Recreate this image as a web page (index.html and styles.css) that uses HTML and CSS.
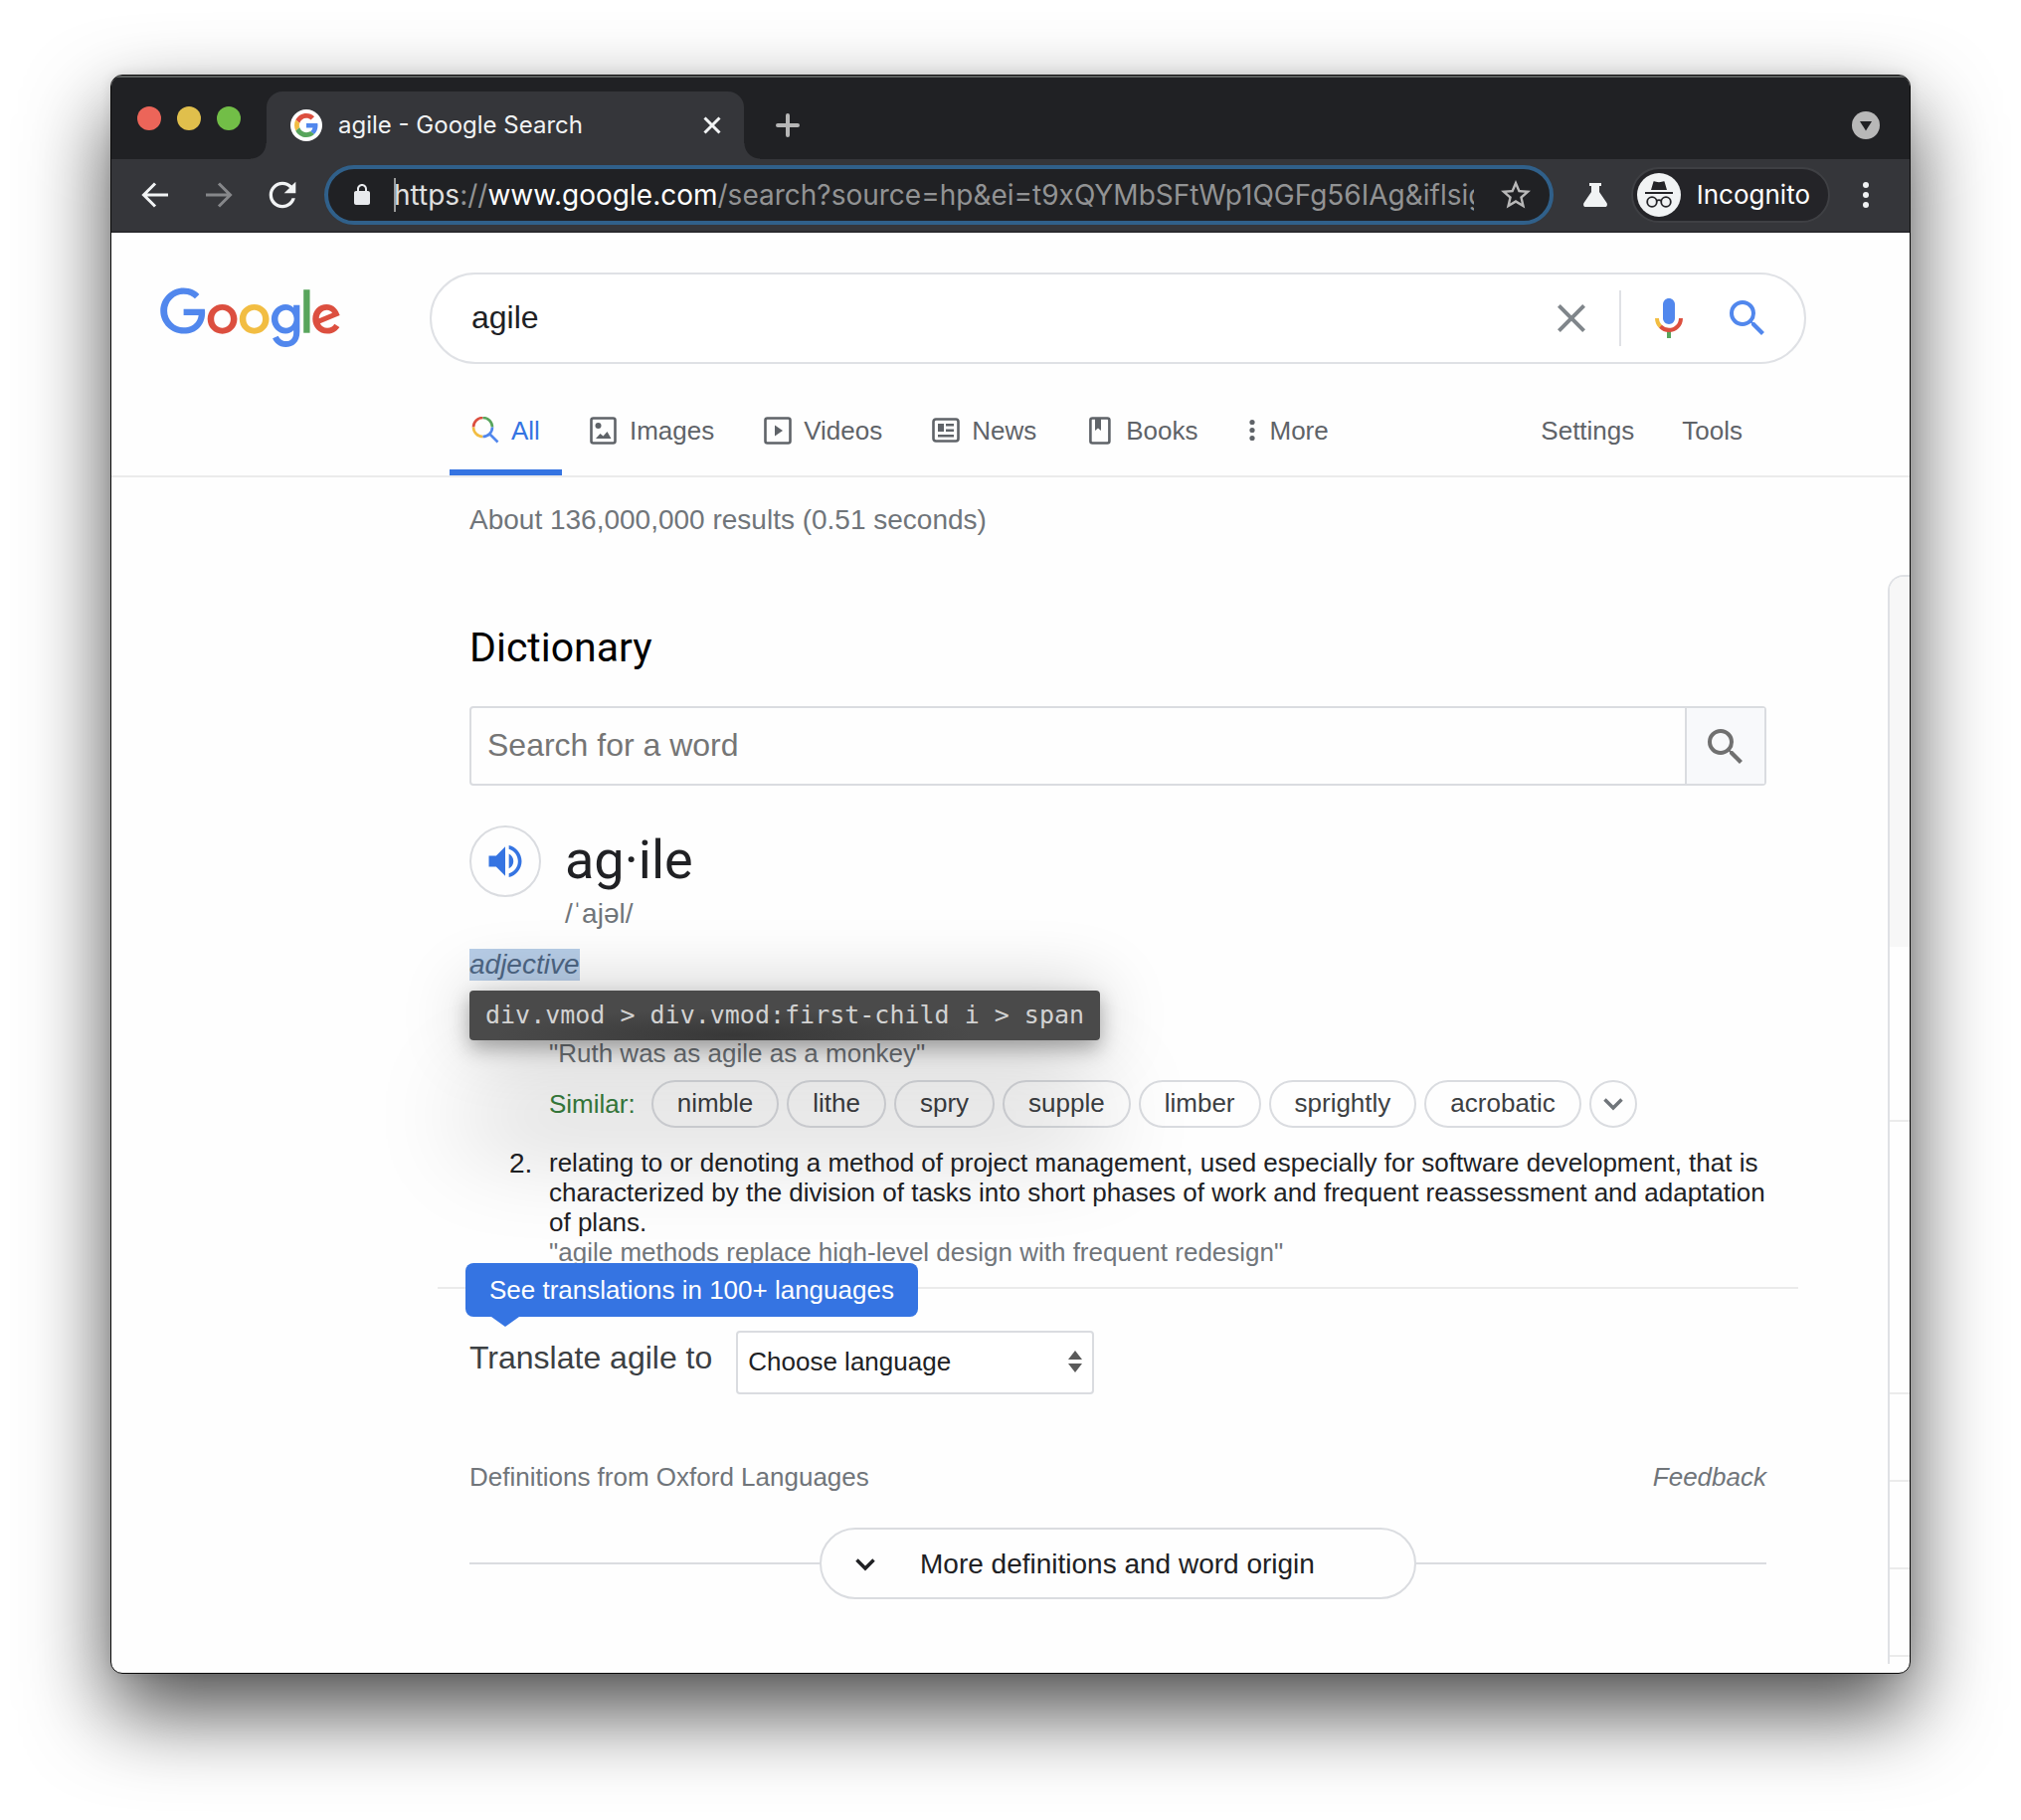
FILE: index.html
```html
<!DOCTYPE html>
<html lang="en">
<head>
<meta charset="utf-8">
<title>agile - Google Search</title>
<link rel="stylesheet" href="styles.css">
</head>
<body>
<div class="window">
  <div class="tabstrip">
    <div class="lights"><span class="light red"></span><span class="light yellow"></span><span class="light green"></span></div>
    <div class="tab">
      <span class="favicon"><svg width="24" height="24" viewBox="0 0 48 48"><path fill="#dc4f3f" d="M24 9.5c3.54 0 6.71 1.22 9.21 3.6l6.85-6.85C35.9 2.38 30.47 0 24 0 14.62 0 6.51 5.38 2.56 13.22l7.98 6.19C12.43 13.72 17.74 9.5 24 9.5z"/><path fill="#5187ed" d="M46.98 24.55c0-1.57-.15-3.09-.38-4.55H24v9.02h12.94c-.58 2.96-2.26 5.48-4.78 7.18l7.73 6c4.51-4.18 7.09-10.36 7.09-17.65z"/><path fill="#f2bd42" d="M10.53 28.59c-.48-1.45-.76-2.99-.76-4.59s.27-3.14.76-4.59l-7.98-6.19C.92 16.46 0 20.12 0 24c0 3.88.92 7.54 2.56 10.78l7.97-6.19z"/><path fill="#58a55c" d="M24 48c6.48 0 11.93-2.13 15.89-5.81l-7.73-6c-2.15 1.45-4.92 2.3-8.16 2.3-6.26 0-11.57-4.22-13.47-9.91l-7.98 6.19C6.51 42.62 14.62 48 24 48z"/></svg></span>
      <span class="tab-title">agile - Google Search</span>
      <button class="icon-btn tab-close" aria-label="Close tab"><svg width="20" height="20" viewBox="0 0 20 20" fill="none" stroke="#f1f3f4" stroke-width="3"><path d="M2.500 2.500l15 15M17.500 2.500l-15 15"/></svg></button>
    </div>
    <button class="icon-btn new-tab" aria-label="New tab"><svg width="26" height="26" viewBox="0 0 26 26" fill="none" stroke="#b6b6b6" stroke-width="4" stroke-linecap="round"><path d="M13 3v20M3 13h20"/></svg></button>
    <button class="icon-btn tab-search" aria-label="Search tabs"><svg width="28" height="28" viewBox="0 0 28 28"><circle cx="14" cy="14" r="14" fill="#b8b8b8"/><path d="M8 10h12l-6 9.500z" fill="#202124"/></svg></button>
  </div>

  <div class="toolbar">
    <button class="icon-btn tool" aria-label="Back"><svg width="40" height="40" viewBox="0 0 40 40" fill="none" stroke="#f1f3f4" stroke-width="3"><path d="M33 20H9M20 8.500L8.500 20 20 31.500"/></svg></button>
    <button class="icon-btn tool" aria-label="Forward"><svg width="40" height="40" viewBox="0 0 40 40" fill="none" stroke="#86878a" stroke-width="3"><path d="M7 20h24M20 8.500L31.500 20 20 31.500"/></svg></button>
    <button class="icon-btn tool" aria-label="Reload"><svg width="40" height="40" viewBox="0 0 24 24" fill="#f1f3f4"><path d="M17.650 6.350C16.200 4.900 14.210 4 12 4c-4.420 0-7.990 3.580-7.990 8s3.570 8 7.990 8c3.730 0 6.840-2.550 7.730-6h-2.080c-.82 2.330-3.040 4-5.650 4-3.310 0-6-2.690-6-6s2.690-6 6-6c1.660 0 3.140.69 4.220 1.780L13 11h7V4l-2.350 2.350z"/></svg></button>
    <div class="omnibox">
      <svg class="lock" width="24" height="24" viewBox="0 0 24 24" fill="#e8eaed"><path d="M18 8h-1V6c0-2.760-2.240-5-5-5S7 3.240 7 6v2H6c-1.100 0-2 .9-2 2v10c0 1.100.9 2 2 2h12c1.100 0 2-.9 2-2V10c0-1.100-.9-2-2-2zM9 6c0-1.660 1.340-3 3-3s3 1.340 3 3v2H9V6z"/></svg>
      <div class="url" role="textbox" aria-label="Address" tabindex="0"><span class="scheme">https</span>://<span class="host">www.google.com</span>/search?source=hp&amp;ei=t9xQYMbSFtWp1QGFg56IAg&amp;iflsig</div>
      <button class="icon-btn star" aria-label="Bookmark this page"><svg width="36" height="36" viewBox="0 0 24 24" fill="#b8b8b8"><path d="M22 9.240l-7.190-.62L12 2 9.190 8.630 2 9.240l5.460 4.730L5.820 21 12 17.270 18.180 21l-1.630-7.030L22 9.240zM12 15.400l-3.760 2.270 1-4.280-3.320-2.880 4.380-.38L12 6.100l1.710 4.040 4.380.38-3.320 2.880 1 4.280L12 15.400z"/></svg></button>
    </div>
    <button class="icon-btn flask" aria-label="Experiments"><svg width="24" height="24" viewBox="0 0 24 24" fill="#f1f3f4"><path d="M6 0h12v3h-2v6l7.500 11c1 2 .2 4-2 4h-19c-2.200 0-3-2-2-4L8 9V3H6z"/></svg></button>
    <button class="profile">
      <svg width="44" height="44" viewBox="0 0 44 44"><circle cx="22" cy="22" r="22" fill="#f1f3f4"/><path d="M16.500 8.500c1-.6 3 .8 5.500.8s4.500-1.400 5.500-.8L30 17H14z" fill="#242428"/><path d="M8 20h28" stroke="#242428" stroke-width="2"/><g fill="none" stroke="#242428" stroke-width="1.800"><circle cx="15" cy="29" r="4.800"/><circle cx="29" cy="29" r="4.800"/><path d="M19.500 28q2.500-1.600 5 0"/></g></svg>
      <span>Incognito</span>
    </button>
    <button class="icon-btn menu" aria-label="Menu"><svg width="8" height="28" viewBox="0 0 8 28" fill="#f1f3f4"><circle cx="4" cy="4" r="3"/><circle cx="4" cy="14" r="3"/><circle cx="4" cy="24" r="3"/></svg></button>
  </div>

  <div class="page">
    <header class="masthead">
      <a class="logo" href="#" aria-label="Google"><svg width="182" height="62" viewBox="0 0 272 92"><path fill="#dc4f3f" d="M115.750 47.180c0 12.770-9.990 22.180-22.250 22.180s-22.250-9.410-22.250-22.180C71.250 34.320 81.240 25 93.500 25s22.250 9.320 22.250 22.180zm-9.740 0c0-7.980-5.790-13.440-12.510-13.440S80.990 39.200 80.990 47.180c0 7.900 5.790 13.440 12.510 13.440s12.510-5.550 12.510-13.440z"/><path fill="#f2bd42" d="M163.750 47.180c0 12.770-9.990 22.180-22.250 22.180s-22.250-9.410-22.250-22.180c0-12.850 9.990-22.180 22.250-22.180s22.250 9.320 22.250 22.180zm-9.740 0c0-7.980-5.790-13.440-12.510-13.440s-12.510 5.460-12.510 13.440c0 7.900 5.790 13.440 12.510 13.440s12.510-5.550 12.510-13.440z"/><path fill="#5187ed" d="M209.750 26.340v39.820c0 16.380-9.660 23.070-21.080 23.070-10.750 0-17.220-7.190-19.660-13.070l8.480-3.530c1.510 3.610 5.210 7.870 11.170 7.870 7.310 0 11.840-4.510 11.840-13v-3.190h-.34c-2.180 2.690-6.380 5.040-11.680 5.040-11.090 0-21.250-9.660-21.250-22.090 0-12.520 10.160-22.260 21.250-22.260 5.290 0 9.490 2.350 11.680 4.960h.34v-3.610h9.250zm-8.560 20.920c0-7.810-5.210-13.520-11.840-13.520-6.720 0-12.350 5.710-12.350 13.520 0 7.730 5.630 13.360 12.350 13.360 6.630 0 11.840-5.630 11.840-13.360z"/><path fill="#58a55c" d="M225 3v65h-9.500V3h9.500z"/><path fill="#dc4f3f" d="M262.020 54.480l7.560 5.040c-2.440 3.610-8.320 9.830-18.480 9.830-12.600 0-22.010-9.740-22.010-22.180 0-13.190 9.490-22.180 20.920-22.180 11.510 0 17.140 9.160 18.980 14.110l1.010 2.520-29.650 12.280c2.270 4.450 5.800 6.720 10.750 6.720 4.960 0 8.400-2.440 10.920-6.140zm-23.270-7.980l19.820-8.230c-1.090-2.770-4.370-4.700-8.230-4.700-4.950 0-11.840 4.370-11.590 12.930z"/><path fill="#5187ed" d="M35.290 41.410V32H67c.31 1.640.47 3.580.47 5.680 0 7.060-1.930 15.790-8.150 22.010-6.050 6.300-13.780 9.660-24.020 9.660C16.320 69.350.36 53.890.36 34.910.36 15.930 16.320.47 35.300.47c10.500 0 17.980 4.120 23.600 9.490l-6.640 6.640c-4.030-3.780-9.490-6.720-16.970-6.720-13.860 0-24.700 11.170-24.700 25.030 0 13.860 10.840 25.030 24.700 25.030 8.990 0 14.110-3.610 17.390-6.890 2.660-2.660 4.410-6.460 5.100-11.650l-22.490.01z"/></svg></a>
      <form class="searchbox">
        <input class="query" type="text" value="agile" aria-label="Search">
        <button class="icon-btn" type="button" aria-label="Clear"><svg width="48" height="48" viewBox="0 0 24 24" fill="#80868b"><path d="M19 6.410L17.590 5 12 10.590 6.410 5 5 6.410 10.590 12 5 17.590 6.410 19 12 13.410 17.590 19 19 17.590 13.410 12z"/></svg></button>
        <span class="rule"></span>
        <button class="icon-btn" type="button" aria-label="Search by voice"><svg width="48" height="48" viewBox="0 0 24 24"><path fill="#5187ed" d="m12 15c1.660 0 3-1.310 3-2.970v-7.020c0-1.660-1.340-3.010-3-3.010s-3 1.340-3 3.010v7.020c0 1.660 1.340 2.970 3 2.970z"/><path fill="#58a55c" d="m11 18.080h2v3.920h-2z"/><path fill="#f2bd42" d="m7.050 16.870c-1.270-1.330-2.050-2.830-2.050-4.870h2c0 1.450 0.560 2.420 1.470 3.380v0.320l-1.150 1.180z"/><path fill="#dc4f3f" d="m12 16.930a4.970 5.250 0 0 1 -3.540 -1.550l-1.410 1.490c1.260 1.340 3.020 2.130 4.950 2.130 3.870 0 6.990-2.920 6.990-7h-1.990c0 2.920-2.240 4.930-5 4.930z"/></svg></button>
        <button class="icon-btn submit" type="submit" aria-label="Google Search"><svg width="48" height="48" viewBox="0 0 24 24" fill="#5187ed"><path d="M15.500 14h-.79l-.28-.27A6.471 6.471 0 0 0 16 9.500 6.500 6.500 0 1 0 9.500 16c1.610 0 3.090-.59 4.230-1.570l.27.28v.79l5 4.990L20.490 19l-4.990-5zm-6 0C7.010 14 5 11.990 5 9.500S7.010 5 9.500 5 14 7.010 14 9.500 11.990 14 9.500 14z"/></svg></button>
      </form>
    </header>

    <nav class="modes">
      <a class="mode current" href="#"><svg width="28" height="28" viewBox="0 0 28 28" fill="none" stroke-width="2.600"><path stroke="#dc4f3f" d="M2 10.500a9.500 9.500 0 0 1 9.500-9.500"/><path stroke="#58a55c" d="M11.500 1a9.500 9.500 0 0 1 9.500 9.500"/><path stroke="#f2bd42" d="M2 10.500a9.500 9.500 0 0 0 9.500 9.500"/><path stroke="#5187ed" d="M11.500 20a9.500 9.500 0 0 0 9.500-9.500M17.500 16.500l9 9"/></svg>All</a>
      <a class="mode" href="#"><svg width="28" height="28" viewBox="0 0 28 28"><rect x="1.500" y="1.500" width="24" height="25" rx="2" fill="none" stroke="#5f6368" stroke-width="2.600"/><circle cx="8.500" cy="9" r="3" fill="#5f6368"/><path d="M6 22l4.500-5 3 2.500 4-4.500 4 7z" fill="#5f6368"/></svg>Images</a>
      <a class="mode" href="#"><svg width="28" height="28" viewBox="0 0 28 28"><rect x="1.500" y="1.500" width="25" height="25" rx="2" fill="none" stroke="#5f6368" stroke-width="2.600"/><path d="M11 8.500v11l8-5.500z" fill="#5f6368"/></svg>Videos</a>
      <a class="mode" href="#"><svg width="28" height="28" viewBox="0 0 28 28"><rect x="1.500" y="2.500" width="25" height="22" rx="2.500" fill="none" stroke="#5f6368" stroke-width="2.600"/><path d="M6 7h6v8H6zM14 7h8v2.500h-8zM14 12.500h8V15h-8zM6 18h16v2.500H6z" fill="#5f6368"/></svg>News</a>
      <a class="mode" href="#"><svg width="28" height="28" viewBox="0 0 28 28"><rect x="4.400" y="1.500" width="19" height="25" rx="2" fill="none" stroke="#5f6368" stroke-width="2.600"/><path d="M9 2h6v12l-3-2.500L9 14z" fill="#5f6368"/></svg>Books</a>
      <button class="mode"><svg width="10" height="24" viewBox="0 0 10 24" fill="#5f6368"><circle cx="5" cy="3.500" r="2.600"/><circle cx="5" cy="11.500" r="2.600"/><circle cx="5" cy="19.500" r="2.600"/></svg>More</button>
      <div class="mode-tools"><a href="#">Settings</a><a href="#">Tools</a></div>
    </nav>

    <div class="results">
      <main class="column">
        <p class="stats">About 136,000,000 results (0.51 seconds)</p>
        <h2 class="heading">Dictionary</h2>
        <form class="word-search">
          <input type="text" placeholder="Search for a word" aria-label="Search for a word">
          <button class="icon-btn" type="submit" aria-label="Look up"><svg width="48" height="48" viewBox="0 0 24 24" fill="#707070"><path d="M15.500 14h-.79l-.28-.27A6.471 6.471 0 0 0 16 9.500 6.500 6.500 0 1 0 9.500 16c1.610 0 3.090-.59 4.230-1.570l.27.28v.79l5 4.990L20.490 19l-4.990-5zm-6 0C7.010 14 5 11.990 5 9.500S7.010 5 9.500 5 14 7.010 14 9.500 11.990 14 9.500 14z"/></svg></button>
        </form>
        <div class="headword">
          <button class="speak" aria-label="Listen"><svg width="44" height="44" viewBox="0 0 24 24" fill="#3574e2"><path d="M3 9v6h4l5 5V4L7 9H3zm13.500 3c0-1.770-1.020-3.290-2.500-4.030v8.050c1.480-.73 2.500-2.250 2.500-4.020zM14 3.230v2.060c2.890.86 5 3.540 5 6.710s-2.110 5.850-5 6.710v2.060c4.010-.91 7-4.490 7-8.770s-2.990-7.860-7-8.770z"/></svg></button>
          <div>
            <div class="word">ag·ile</div>
            <div class="phonetic">/ˈajəl/</div>
          </div>
        </div>
        <div class="pos"><i class="inspected">adjective</i><div class="selector-tip">div.vmod &gt; div.vmod:first-child i &gt; span</div></div>
        <p class="example first">"Ruth was as agile as a monkey"</p>
        <div class="similar">
          <span class="similar-label">Similar:</span>
          <button class="chip">nimble</button><button class="chip">lithe</button><button class="chip">spry</button><button class="chip">supple</button><button class="chip">limber</button><button class="chip">sprightly</button><button class="chip">acrobatic</button>
          <button class="chip more" aria-label="More similar words"><svg width="20" height="14" viewBox="0 0 20 14" fill="none" stroke="#70757a" stroke-width="3.500"><path d="M1.500 2.500l8.500 8.500 8.500-8.500"/></svg></button>
        </div>
        <div class="sense">
          <span class="num">2.</span>
          <div>
            <p class="definition">relating to or denoting a method of project management, used especially for software development, that is characterized by the division of tasks into short phases of work and frequent reassessment and adaptation of plans.</p>
            <p class="example">"agile methods replace high-level design with frequent redesign"</p>
          </div>
        </div>
        <div class="translate">
          <div class="callout">See translations in 100+ languages</div>
          <label for="lang">Translate agile to</label>
          <div class="select-wrap">
            <select id="lang"><option>Choose language</option></select>
            <svg class="select-arrows" width="14" height="22" viewBox="0 0 14 22" fill="#5a5a5a"><path d="M0 9l7-9 7 9zM0 13l7 9 7-9z"/></svg>
          </div>
        </div>
        <div class="source"><span>Definitions from Oxford Languages</span><a href="#">Feedback</a></div>
        <div class="expand"><button class="expand-btn"><svg width="20" height="14" viewBox="0 0 20 14" fill="none" stroke="#202124" stroke-width="3.500"><path d="M1.500 2.500l8.500 8.500 8.500-8.500"/></svg><span>More definitions and word origin</span></button></div>
      </main>
      <aside class="side-card"><div class="side-image"></div><div class="side-row title"></div><div class="side-row about"></div><div class="side-row"></div><div class="side-row"></div><div class="side-row"></div></aside>
    </div>
  </div>
</div>
</body>
</html>
```
FILE: styles.css
```css
* { box-sizing: border-box; }
body { margin: 0; padding: 75px 111px 147px; background: #fff; color: #202124; font-family: "Liberation Sans", Arial, sans-serif; font-size: 26px; line-height: 30px; }
p, h2 { margin: 0; font-weight: 400; }
svg { display: block; flex: none; }
a { color: inherit; text-decoration: none; }
button, input, select { font: inherit; color: inherit; }
button { margin: 0; padding: 0; border: 0; background: none; }
input { min-width: 0; border: 0; outline: 0; background: none; }
.icon-btn { display: flex; align-items: center; justify-content: center; flex: none; }

.window { border: 1px solid #0a0a0a; border-radius: 12px; overflow: hidden; background: #fefefe; box-shadow: 0 38px 84px rgba(0, 0, 0, .7), 0 0 12px rgba(0, 0, 0, .1); }

/* tab strip */
.tabstrip { display: flex; align-items: flex-end; height: 84px; padding: 0 30px 0 26px; background: #202124; box-shadow: inset 0 2px 0 #5c5f5e; color: #f1f3f4; font-family: Inter, sans-serif; }
.lights { display: flex; gap: 16px; padding-bottom: 29px; }
.light { width: 24px; height: 24px; border-radius: 50%; }
.red { background: #ec6559; }
.yellow { background: #e0bf4c; }
.green { background: #72be47; }
.tab { position: relative; display: flex; align-items: center; width: 480px; height: 68px; margin-left: 26px; padding: 0 22px 0 24px; border-radius: 16px 16px 0 0; background: #35363a; }
.tab::before, .tab::after { content: ""; position: absolute; bottom: 0; width: 16px; height: 16px; }
.tab::before { left: -16px; background: radial-gradient(circle at 0 0, transparent 15px, #35363a 16px); }
.tab::after { right: -16px; background: radial-gradient(circle at 100% 0, transparent 15px, #35363a 16px); }
.favicon { display: flex; align-items: center; justify-content: center; width: 32px; height: 32px; border-radius: 50%; background: #fff; }
.tab-title { flex: 1; margin-left: 16px; font-size: 24px; white-space: nowrap; }
.new-tab { height: 68px; margin-left: 31px; }
.tab-search { height: 68px; margin-left: auto; }

/* toolbar */
.toolbar { display: flex; align-items: center; height: 74px; padding: 6px 28px; border-bottom: 2px solid #2a2a2e; background: #35363a; color: #fff; font-family: Inter, sans-serif; }
.tool { margin-right: 24px; }
.tool:first-child { margin-left: -4px; }
.omnibox { display: flex; align-items: center; flex: 1; min-width: 0; height: 60px; margin-right: 26px; padding: 0 16px 0 22px; border: 4px solid #30608a; border-radius: 30px; background: #202124; }
.tool + .omnibox { margin-left: -2px; }
.lock { margin-right: 20px; }
.url { flex: 1; min-width: 0; overflow: hidden; box-shadow: inset 2px 0 0 #9a9a9a; color: #929394; font-size: 28px; line-height: 34px; white-space: nowrap; }
.scheme { color: #e0e0e0; }
.host { color: #fff; }
.star { margin-left: 24px; }
.flask { width: 32px; margin-right: 20px; }
.profile { display: flex; align-items: center; gap: 16px; height: 56px; margin-right: 20px; padding: 0 18px 0 4px; border: 2px solid #3f4044; border-radius: 28px; background: #242428; color: #fff; font-size: 26px; }
.menu { width: 32px; }

/* search header */
.masthead { display: flex; align-items: center; gap: 89px; padding: 40px 104px 0 49px; }
.searchbox { display: flex; align-items: center; flex: 1; height: 92px; padding: 0 33px 0 40px; border: 2px solid #dfe1e5; border-radius: 46px; background: #fff; }
.query { flex: 1; height: 60px; padding: 0 0 2px; font-size: 32px; }
.rule { width: 2px; height: 56px; margin: 0 24px; background: #dfe1e5; }
.submit { margin-left: 31px; }
.modes { display: flex; gap: 6px; height: 114px; padding: 22px 168px 0 340px; border-bottom: 2px solid #ebebeb; color: #5f6368; }
.mode { display: flex; align-items: center; gap: 12px; padding: 0 22px; border: solid transparent; border-width: 6px 0; }
.mode.current { border-bottom-color: #3574e2; color: #3574e2; }
.mode-tools { display: flex; align-items: center; gap: 48px; margin-left: auto; }

/* results */
.results { display: flex; }
.column { flex: 1; min-width: 0; padding: 27px 0 74px; margin: 0 122px 0 360px; }
.stats { color: #70757a; font-size: 28px; line-height: 32px; }
.heading { margin-top: 88px; color: #000; font-family: Roboto, sans-serif; font-size: 41px; line-height: 48px; }
.word-search { display: flex; height: 80px; margin-top: 35px; border: 2px solid #dadce0; border-radius: 4px; }
.word-search input { flex: 1; padding: 0 16px 2px; font-size: 32px; }
.word-search input::placeholder { color: #757575; opacity: 1; }
.word-search button { width: 80px; padding-top: 2px; border-left: 2px solid #dadce0; background: #f8f9fb; }
.headword { display: flex; gap: 24px; margin-top: 40px; }
.speak { display: flex; align-items: center; justify-content: center; width: 72px; height: 72px; border: 2px solid #dadce0; border-radius: 50%; }
.word { font-family: Roboto, sans-serif; font-size: 54px; line-height: 70px; }
.phonetic { color: #70757a; font-size: 28px; line-height: 38px; }
.pos { position: relative; margin-top: 16px; font-size: 28px; line-height: 32px; }
.inspected { display: inline-block; background: #b7cde7; color: #4e6684; }
.selector-tip { position: absolute; top: 42px; left: 0; height: 50px; padding: 0 16px; border-radius: 4px; background: radial-gradient(ellipse 240px 26px at 42% 90%, #383838, #4a4a4a); box-shadow: 0 8px 20px rgba(0, 0, 0, .3), 0 0 70px rgba(0, 0, 0, .22), 0 100px 100px rgba(0, 0, 0, .22); color: #d2d2d2; font-family: "DejaVu Sans Mono", monospace; font-size: 25px; line-height: 50px; white-space: nowrap; }
.example { color: #70757a; }
.example.first { margin: 58px 0 0 80px; }
.similar { display: flex; align-items: center; gap: 8px; margin: 12px 0 0 80px; }
.similar-label { margin-right: 8px; color: #39803f; }
.chip { height: 48px; padding: 0 24px 2px; border: 2px solid #dadce0; border-radius: 24px; color: #3c4043; }
.chip.more { display: flex; align-items: center; justify-content: center; width: 48px; padding: 0; }
.sense { display: flex; margin-top: 20px; padding-left: 40px; }
.num { flex: none; width: 40px; font-size: 28px; line-height: 32px; }
.translate { position: relative; display: flex; align-items: center; gap: 24px; margin: 20px -32px 0; padding: 42px 32px 0; border-top: 2px solid #ebebeb; }
.translate label { padding-bottom: 10px; color: #3c4043; font-size: 32px; line-height: 36px; }
.callout { position: absolute; top: -26px; left: 28px; height: 54px; padding: 0 24px; border-radius: 8px; background: #3574e2; color: #fff; line-height: 54px; white-space: nowrap; }
.callout::after { content: ""; position: absolute; top: 54px; left: 26px; border: 14px solid transparent; border-width: 10px 14px 0; border-top-color: #3574e2; }
.select-wrap { position: relative; }
.select-wrap select { display: block; width: 360px; height: 64px; padding: 0 10px 2px; border: 2px solid #dadce0; border-radius: 4px; background: #fff; appearance: none; }
.select-arrows { position: absolute; top: 20px; right: 12px; pointer-events: none; }
.source { display: flex; justify-content: space-between; margin-top: 68px; color: #70757a; }
.source a { font-style: italic; }
.expand { display: flex; align-items: center; margin-top: 36px; }
.expand::before, .expand::after { content: ""; flex: 1; height: 2px; background: #dadce0; }
.expand-btn { display: flex; align-items: center; gap: 45px; width: 600px; height: 72px; padding: 2px 0 0 34px; border: 2px solid #dadce0; border-radius: 36px; font-size: 28px; }

/* knowledge card, cut off by the window's edge */
.side-card { flex: none; width: 22px; margin: 98px 0 9px; border: solid #dfe1e5; border-width: 2px 0 0 2px; border-radius: 16px 0 0 0; overflow: hidden; }
.side-image { height: 372px; background: #f7f7f7; }
.side-row { height: 88px; border-bottom: 2px solid #ebebeb; }
.side-row.title { height: 176px; }
.side-row.about { height: 274px; }
```
